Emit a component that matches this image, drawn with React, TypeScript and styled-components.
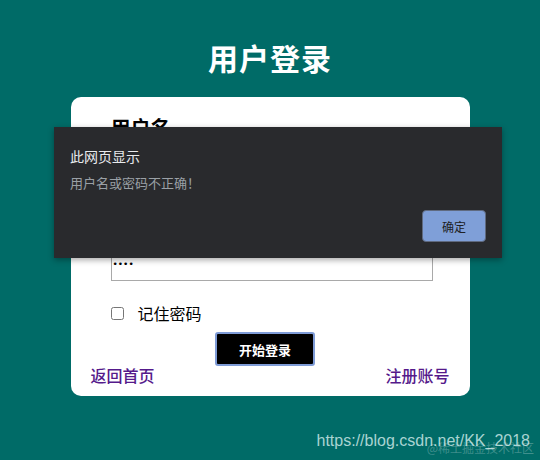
import React from "react";
import styled, { createGlobalStyle } from "styled-components";

const GlobalStyle = createGlobalStyle`
  html, body {
    margin: 0;
    padding: 0;
  }
  body {
    font-family: "Liberation Sans", "Noto Sans CJK SC", sans-serif;
  }
`;

const Page = styled.div`
  position: relative;
  width: 540px;
  height: 460px;
  overflow: hidden;
  background-color: #006b67;
  display: flex;
  flex-direction: column;
  align-items: center;
`;

const Title = styled.h1`
  margin: 36px 0 0;
  color: #ffffff;
  font-family: "Noto Sans CJK SC", sans-serif;
  font-size: 30px;
  font-weight: bold;
  line-height: 42px;
  letter-spacing: 1px;
`;

const Card = styled.div`
  margin-top: 19px;
  box-sizing: border-box;
  width: 399px;
  height: 299px;
  background: #ffffff;
  border-radius: 10px;
  padding: 18px 20px 0 20px;
  display: flex;
  flex-direction: column;
`;

const FieldLabel = styled.div<{ $top?: number }>`
  margin: ${(p) => p.$top ?? 0}px 0 0 20px;
  font-family: "Noto Sans CJK SC", sans-serif;
  font-size: 20px;
  font-weight: bold;
  line-height: 26px;
  color: #000;
`;

const Field = styled.input<{ $top: number }>`
  margin: ${(p) => p.$top}px 0 0 20px;
  box-sizing: border-box;
  width: 322px;
  height: 32px;
  border: 1px solid #a9a9a9;
  padding: 0 1px 2px;
  font-family: "DejaVu Sans", sans-serif;
  font-size: 9px;
  outline: none;
`;

const RememberRow = styled.label`
  margin: 20px 0 0 20px;
  display: flex;
  align-items: center;
  gap: 14px;
  font-family: "Noto Sans CJK SC", sans-serif;
  font-size: 16px;
  color: #000;
`;

const Check = styled.input`
  margin: 0;
  width: 13px;
  height: 13px;
`;

const SubmitButton = styled.button`
  align-self: center;
  margin: 7px 10px 0 0;
  width: 100px;
  height: 34px;
  background: #000;
  color: #fff;
  border: 2px solid #7e9bd6;
  border-radius: 3px;
  font-family: "Noto Sans CJK SC", sans-serif;
  font-size: 13px;
  font-weight: bold;
`;

const Links = styled.div`
  display: flex;
  justify-content: space-between;
  margin-top: -2px;
`;

const Link = styled.a`
  color: #551a8b;
  font-family: "Noto Sans CJK SC", sans-serif;
  font-size: 16px;
  font-weight: 500;
  text-decoration: none;
  line-height: 22px;
`;

const Dialog = styled.div`
  position: absolute;
  left: 54px;
  top: 127px;
  width: 448px;
  height: 131px;
  box-sizing: border-box;
  background: #292a2d;
  box-shadow: 0 2px 6px rgba(0, 0, 0, 0.35);
  padding: 20px 16px 16px 16px;
  display: flex;
  flex-direction: column;
  font-family: "Noto Sans CJK SC", sans-serif;
`;

const DialogTitle = styled.div`
  color: #e8eaed;
  font-size: 14px;
  line-height: 18px;
`;

const DialogMessage = styled.div`
  margin-top: 9px;
  color: #9aa0a6;
  font-size: 13px;
  line-height: 18px;
`;

const DialogActions = styled.div`
  margin-top: auto;
  display: flex;
  justify-content: flex-end;
`;

const OkButton = styled.button`
  width: 64px;
  height: 32px;
  background: #7f9fd8;
  color: #202124;
  border: 1px solid #5f6a80;
  border-radius: 4px;
  font-family: "Noto Sans CJK SC", sans-serif;
  font-size: 12px;
`;

const Watermark = styled.div`
  position: absolute;
  right: 10px;
  bottom: 10px;
  color: #a9d4d2;
  font-family: "Liberation Sans", sans-serif;
  font-size: 16px;
`;

const Stamp = styled.span`
  position: absolute;
  right: -4px;
  bottom: -6px;
  color: rgba(255, 255, 255, 0.25);
  font-family: "Noto Sans CJK SC", sans-serif;
  font-size: 12px;
  white-space: nowrap;
`;

const App = () => {
  return (
    <Page>
      <GlobalStyle />
      <Title>用户登录</Title>
      <Card>
        <FieldLabel>用户名</FieldLabel>
        <Field $top={12} type="text" defaultValue="admin" />
        <FieldLabel $top={28}>密码</FieldLabel>
        <Field $top={10} type="password" defaultValue="1234" />
        <RememberRow>
          <Check type="checkbox" />
          记住密码
        </RememberRow>
        <SubmitButton>开始登录</SubmitButton>
        <Links>
          <Link href="#">返回首页</Link>
          <Link href="#">注册账号</Link>
        </Links>
      </Card>
      <Dialog>
        <DialogTitle>此网页显示</DialogTitle>
        <DialogMessage>用户名或密码不正确！</DialogMessage>
        <DialogActions>
          <OkButton>确定</OkButton>
        </DialogActions>
      </Dialog>
      <Watermark>
        https://blog.csdn.net/KK_2018
        <Stamp>@稀土掘金技术社区</Stamp>
      </Watermark>
    </Page>
  );
};

export default App;
